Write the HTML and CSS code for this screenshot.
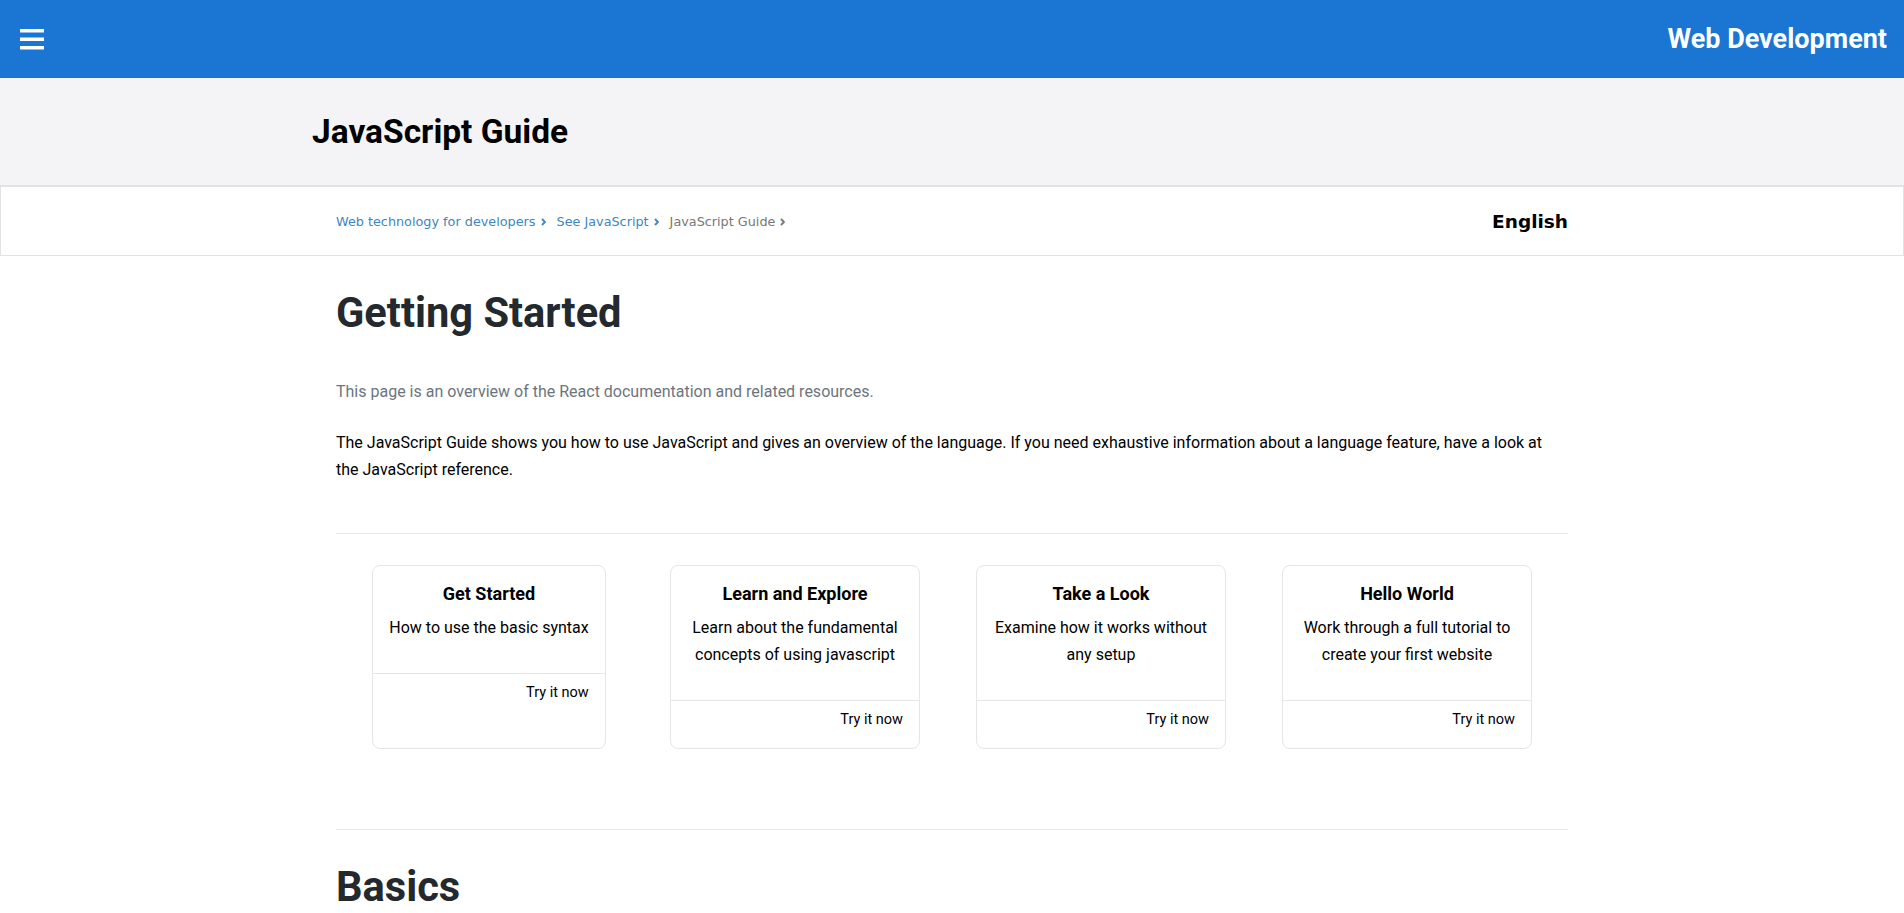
FILE: index.html
```html
<!DOCTYPE html>
<html lang="en">
<head>
<meta charset="utf-8">
<title>JavaScript Guide</title>
<link rel="stylesheet" href="styles.css">
</head>
<body>
<header class="topbar">
  <button class="menu-btn" aria-label="Menu">
    <svg width="24" height="21" viewBox="0 0 24 21"><rect x="0" y="0" width="24" height="3.5" fill="#fff"/><rect x="0" y="8.5" width="24" height="3.5" fill="#fff"/><rect x="0" y="17" width="24" height="3.5" fill="#fff"/></svg>
  </button>
  <div class="brand">Web Development</div>
</header>

<section class="title-band">
  <div class="wrap">
    <h1 class="page-title">JavaScript Guide</h1>
  </div>
</section>

<nav class="crumb-bar">
  <div class="wrap inner">
    <ol class="crumbs">
      <li class="crumb link">Web technology for developers<svg class="chev" width="5" height="8" viewBox="0 0 5 8"><path d="M1 1l3 3-3 3" fill="none" stroke="currentColor" stroke-width="1.9"/></svg></li>
      <li class="crumb link">See JavaScript<svg class="chev" width="5" height="8" viewBox="0 0 5 8"><path d="M1 1l3 3-3 3" fill="none" stroke="currentColor" stroke-width="1.9"/></svg></li>
      <li class="crumb current">JavaScript Guide<svg class="chev" width="5" height="8" viewBox="0 0 5 8"><path d="M1 1l3 3-3 3" fill="none" stroke="currentColor" stroke-width="1.9"/></svg></li>
    </ol>
    <div class="lang">English</div>
  </div>
</nav>

<main class="wrap inner content">
  <h2 class="section-title first">Getting Started</h2>
  <p class="lead">This page is an overview of the React documentation and related resources.</p>
  <p class="body-text">The JavaScript Guide shows you how to use JavaScript and gives an overview of the language. If you need exhaustive information about a language feature, have a look at the JavaScript reference.</p>
  <hr class="rule">
  <div class="cards">
    <div class="cell">
      <div class="card">
        <div class="card-body">
          <div class="card-title">Get Started</div>
          <div class="card-text">How to use the basic syntax</div>
        </div>
        <div class="card-foot">Try it now</div>
      </div>
    </div>
    <div class="cell">
      <div class="card">
        <div class="card-body">
          <div class="card-title">Learn and Explore</div>
          <div class="card-text">Learn about the fundamental concepts of using javascript</div>
        </div>
        <div class="card-foot">Try it now</div>
      </div>
    </div>
    <div class="cell">
      <div class="card">
        <div class="card-body">
          <div class="card-title">Take a Look</div>
          <div class="card-text">Examine how it works without any setup</div>
        </div>
        <div class="card-foot">Try it now</div>
      </div>
    </div>
    <div class="cell">
      <div class="card">
        <div class="card-body">
          <div class="card-title">Hello World</div>
          <div class="card-text">Work through a full tutorial to create your first website</div>
        </div>
        <div class="card-foot">Try it now</div>
      </div>
    </div>
  </div>
  <hr class="rule rule-2">
  <h2 class="section-title">Basics</h2>
</main>
</body>
</html>
```
FILE: styles.css
```css
* { box-sizing: border-box; }
html, body { margin: 0; padding: 0; }
body {
  font-family: Roboto, "Liberation Sans", sans-serif;
  color: #000;
  background: #fff;
  overflow: hidden;
}

.topbar {
  height: 78px;
  background: #1a76d2;
  display: flex;
  align-items: center;
  justify-content: space-between;
  padding: 0 17px 0 20px;
}
.menu-btn {
  background: none;
  border: 0;
  padding: 0;
  margin: 0;
  display: flex;
  cursor: pointer;
}
.brand {
  color: #fff;
  font-weight: 700;
  font-size: 27px;
}

.wrap {
  width: 1280px;
  margin: 0 auto;
}
.wrap.inner {
  padding: 0 24px;
}

.title-band {
  background: #f4f4f6;
  height: 107px;
  display: flex;
  align-items: center;
}
.page-title {
  margin: 0;
  font-size: 33.5px;
  font-weight: 700;
  color: #000;
}

.crumb-bar {
  border: 1px solid #e2e2e2;
  border-top-width: 2px;
  height: 71px;
  display: flex;
  align-items: center;
}
.crumb-bar .inner {
  display: flex;
  align-items: center;
  justify-content: space-between;
}
.crumbs {
  list-style: none;
  margin: 0;
  padding: 0;
  display: flex;
  gap: 11px;
  font-family: "DejaVu Sans", sans-serif;
  font-size: 12.8px;
}
.crumb {
  display: flex;
  align-items: center;
}
.crumb.link { color: #3d86bf; }
.crumb.current { color: #777; }
.chev {
  margin-left: 5px;
  margin-top: 1px;
}
.lang {
  font-family: "DejaVu Sans", sans-serif;
  font-weight: 700;
  font-size: 18.5px;
  color: #000;
}

.content {
  padding-bottom: 40px;
}
.section-title {
  margin: 32px 0 0;
  font-size: 41.6px;
  line-height: 50px;
  font-weight: 700;
  color: #24292e;
}
.lead {
  margin: 40px 0 0;
  font-size: 16px;
  line-height: 27px;
  color: #6c757d;
}
.body-text {
  margin: 24px 0 0;
  font-size: 16px;
  line-height: 27px;
  color: #000;
}
.rule {
  border: 0;
  border-top: 1px solid #e9e9e9;
  margin: 50px 0 0;
}
.rule-2 {
  margin-top: 80px;
}

.cards {
  display: grid;
  grid-template-columns: repeat(4, 306px);
  margin-top: 31px;
}
.cell {
  display: flex;
  justify-content: center;
}
.card {
  max-width: 250px;
  border: 1px solid #e6e6e6;
  border-radius: 8px;
  text-align: center;
}
.card-body {
  padding: 14px 16px 32px;
}
.card-title {
  font-size: 18px;
  font-weight: 700;
  line-height: 27px;
  margin-bottom: 7px;
}
.card-text {
  font-size: 16px;
  line-height: 27px;
}
.card-foot {
  border-top: 1px solid #e6e6e6;
  padding: 5px 16px 15px;
  text-align: right;
  font-size: 14.5px;
  line-height: 27px;
}
```
